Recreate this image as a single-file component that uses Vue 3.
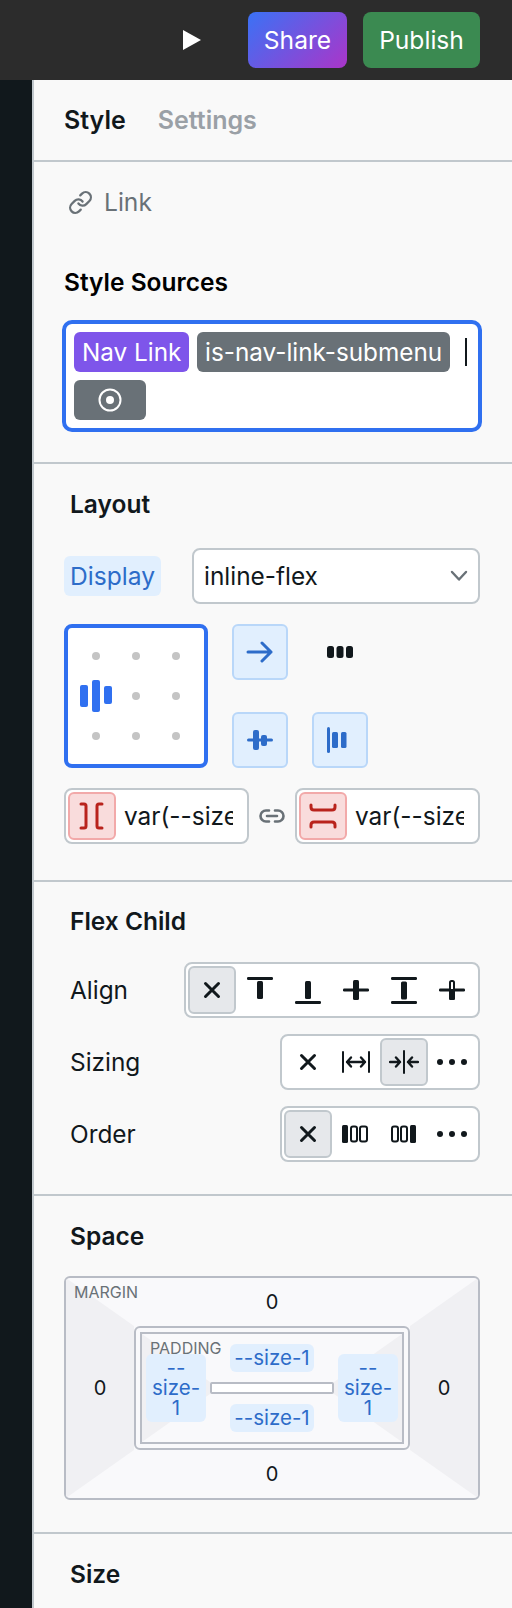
<script setup>
const sides = ['top', 'left', 'right', 'bottom']
</script>

<template>
  <div class="page">
    <header class="topbar">
      <svg class="play" viewBox="0 0 18 20"><path d="M0 0 L18 10 L0 20 Z" fill="#fff" /></svg>
      <button class="top-btn share">Share</button>
      <button class="top-btn publish">Publish</button>
    </header>

    <div class="body">
      <div class="rail"></div>
      <aside class="panel">
        <nav class="tabs">
          <span class="tab active">Style</span>
          <span class="tab">Settings</span>
        </nav>

        <section class="sources">
          <div class="element">
            <svg class="link-icon" viewBox="0 0 24 24" fill="none" stroke="#697177" stroke-width="2.2" stroke-linecap="round" stroke-linejoin="round">
              <path d="M10 13a5 5 0 0 0 7.54.54l3-3a5 5 0 0 0-7.07-7.07l-1.72 1.71" />
              <path d="M14 11a5 5 0 0 0-7.54-.54l-3 3a5 5 0 0 0 7.07 7.07l1.71-1.71" />
            </svg>
            <span>Link</span>
          </div>
          <h2 class="sources-title">Style Sources</h2>
          <div class="source-box">
            <span class="tag purple">Nav Link</span>
            <span class="tag grey">is-nav-link-submenu</span>
            <span class="caret"></span>
            <span class="tag grey state">
              <svg viewBox="0 0 24 24" width="24" height="24" fill="none">
                <circle cx="12" cy="12" r="10.5" stroke="#fff" stroke-width="2" />
                <circle cx="12" cy="12" r="4" fill="#fff" />
              </svg>
            </span>
          </div>
        </section>

        <section class="layout">
          <h2 class="title">Layout</h2>
          <div class="display-row">
            <span class="chip-label">Display</span>
            <div class="select">
              <span>inline-flex</span>
              <svg viewBox="0 0 18 12" width="18" height="12" fill="none" stroke="#697177" stroke-width="2.4" stroke-linecap="round" stroke-linejoin="round"><path d="M2 2 L9 9.5 L16 2" /></svg>
            </div>
          </div>

          <div class="flex-row">
            <div class="align-grid">
              <i v-for="n in 9" :key="n" class="dot" :class="{ hidden: n === 4 }"></i>
              <div class="bars"><b class="b1"></b><b class="b2"></b><b class="b3"></b></div>
            </div>
            <div class="flex-buttons">
              <button class="blue-btn">
                <svg viewBox="0 0 30 30" width="30" height="30" fill="none" stroke="#2d6cc9" stroke-width="3" stroke-linecap="round" stroke-linejoin="round"><path d="M3 15 H26 M17 6 L26 15 L17 24" /></svg>
              </button>
              <span class="plain-cell">
                <svg viewBox="0 0 30 30" width="30" height="30" fill="#11181c"><rect x="2" y="9" width="7" height="12" rx="2.5" /><rect x="11.5" y="9" width="7" height="12" rx="2.5" /><rect x="21" y="9" width="7" height="12" rx="2.5" /></svg>
              </span>
              <button class="blue-btn">
                <svg viewBox="0 0 30 30" width="30" height="30" fill="#2d6cc9"><rect x="2" y="13.5" width="26" height="3" rx="1.5" /><rect x="8" y="5" width="6" height="20" rx="2" /><rect x="16" y="10" width="6" height="11" rx="2" /></svg>
              </button>
              <button class="blue-btn">
                <svg viewBox="0 0 30 30" width="30" height="30" fill="#2d6cc9"><rect x="2" y="2" width="3" height="26" rx="1.5" /><rect x="7" y="7" width="6" height="16" rx="1.5" /><rect x="16" y="7" width="5.5" height="16" rx="1.5" /></svg>
              </button>
            </div>
          </div>

          <div class="gap-row">
            <div class="gap-input">
              <span class="red-box">
                <svg viewBox="0 0 30 30" width="30" height="30" fill="none" stroke="#b9231c" stroke-width="3" stroke-linecap="round"><path d="M4 3 H7 Q9 3 9 5 V25 Q9 27 7 27 H4 M25 3 H22 Q20 3 20 5 V25 Q20 27 22 27 H25" /></svg>
              </span>
              <span class="gap-value">var(--size-1)</span>
            </div>
            <svg class="chain" viewBox="0 0 28 16" width="28" height="16" fill="none" stroke="#697177" stroke-width="2.6" stroke-linecap="round"><path d="M11 2.5 H8 A5.5 5.5 0 0 0 8 13.5 H11 M17 2.5 H20 A5.5 5.5 0 0 1 20 13.5 H17 M9 8 H19" /></svg>
            <div class="gap-input">
              <span class="red-box">
                <svg viewBox="0 0 30 30" width="30" height="30" fill="none" stroke="#b9231c" stroke-width="3" stroke-linecap="round"><path d="M3 4 V6 Q3 9 6 9 H24 Q27 9 27 6 V4 M3 26 V24 Q3 21 6 21 H24 Q27 21 27 24 V26" /></svg>
              </span>
              <span class="gap-value">var(--size-1)</span>
            </div>
          </div>
        </section>

        <section class="child">
          <h2 class="title">Flex Child</h2>
          <div class="prop-row">
            <span class="prop-name">Align</span>
            <div class="seg">
              <span class="cell on"><svg viewBox="0 0 30 30" width="30" height="30" fill="none" stroke="#11181c" stroke-width="3" stroke-linecap="round"><path d="M8.5 8.5 L21.5 21.5 M21.5 8.5 L8.5 21.5" /></svg></span>
              <span class="cell"><svg viewBox="0 0 30 30" width="30" height="30" fill="#11181c"><rect x="2" y="2" width="26" height="3" rx="1.2" /><rect x="12" y="6" width="6" height="18" rx="1.5" /></svg></span>
              <span class="cell"><svg viewBox="0 0 30 30" width="30" height="30" fill="#11181c"><rect x="2" y="26" width="26" height="3" rx="1.2" /><rect x="12" y="6" width="6" height="18" rx="1.5" /></svg></span>
              <span class="cell"><svg viewBox="0 0 30 30" width="30" height="30" fill="#11181c"><rect x="2" y="13.5" width="26" height="3" rx="1.2" /><rect x="12" y="5" width="6" height="20" rx="1.5" /></svg></span>
              <span class="cell"><svg viewBox="0 0 30 30" width="30" height="30" fill="#11181c"><rect x="2" y="2" width="26" height="3" rx="1.2" /><rect x="2" y="26" width="26" height="3" rx="1.2" /><rect x="12" y="6.5" width="6" height="18" rx="1.5" /></svg></span>
              <span class="cell"><svg viewBox="0 0 30 30" width="30" height="30"><rect x="2" y="13.5" width="26" height="3" rx="1.2" fill="#11181c" /><rect x="13" y="6" width="4" height="18" rx="1.5" fill="#fff" stroke="#11181c" stroke-width="2" /><rect x="12" y="14" width="6" height="11" rx="1.5" fill="#11181c" /></svg></span>
            </div>
          </div>
          <div class="prop-row">
            <span class="prop-name">Sizing</span>
            <div class="seg">
              <span class="cell"><svg viewBox="0 0 30 30" width="30" height="30" fill="none" stroke="#11181c" stroke-width="3" stroke-linecap="round"><path d="M8.5 8.5 L21.5 21.5 M21.5 8.5 L8.5 21.5" /></svg></span>
              <span class="cell"><svg viewBox="0 0 30 30" width="30" height="30" fill="none" stroke="#11181c" stroke-width="2" stroke-linecap="round" stroke-linejoin="round"><path d="M2 5 V25 M28 5 V25" /><path d="M6 15 H24 M10 10.5 L6 15 L10 19.5 M20 10.5 L24 15 L20 19.5" stroke-width="2.4" /></svg></span>
              <span class="cell on"><svg viewBox="0 0 30 30" width="30" height="30" fill="none" stroke="#11181c" stroke-width="2" stroke-linecap="round" stroke-linejoin="round"><path d="M15 4 V26" /><path d="M1 15 H11 M7 10.5 L11 15 L7 19.5 M29 15 H19 M23 10.5 L19 15 L23 19.5" stroke-width="2.4" /></svg></span>
              <span class="cell"><svg viewBox="0 0 30 30" width="30" height="30" fill="#11181c"><circle cx="3" cy="15" r="3" /><circle cx="15" cy="15" r="3" /><circle cx="27" cy="15" r="3" /></svg></span>
            </div>
          </div>
          <div class="prop-row">
            <span class="prop-name">Order</span>
            <div class="seg">
              <span class="cell on"><svg viewBox="0 0 30 30" width="30" height="30" fill="none" stroke="#11181c" stroke-width="3" stroke-linecap="round"><path d="M8.5 8.5 L21.5 21.5 M21.5 8.5 L8.5 21.5" /></svg></span>
              <span class="cell"><svg viewBox="0 0 30 30" width="30" height="30" fill="none" stroke="#11181c" stroke-width="2"><rect x="1" y="6" width="6" height="18" rx="1.5" fill="#11181c" stroke="none" /><rect x="10" y="7.5" width="6" height="15" rx="2" /><rect x="19" y="7.5" width="7" height="15" rx="2" /></svg></span>
              <span class="cell"><svg viewBox="0 0 30 30" width="30" height="30" fill="none" stroke="#11181c" stroke-width="2"><rect x="3" y="7.5" width="6" height="15" rx="2" /><rect x="12" y="7.5" width="6" height="15" rx="2" /><rect x="21" y="6" width="6" height="18" rx="1.5" fill="#11181c" stroke="none" /></svg></span>
              <span class="cell"><svg viewBox="0 0 30 30" width="30" height="30" fill="#11181c"><circle cx="3" cy="15" r="3" /><circle cx="15" cy="15" r="3" /><circle cx="27" cy="15" r="3" /></svg></span>
            </div>
          </div>
        </section>

        <section class="space">
          <h2 class="title">Space</h2>
          <div class="box-model">
            <span class="box-label">MARGIN</span>
            <span class="wedge w-left"></span>
            <span class="wedge w-right"></span>
            <span v-for="s in sides" :key="s" class="m-val" :class="'at-' + s">0</span>
            <div class="padding-frame">
              <div class="padding-grid">
                <span class="wedge w-left small"></span>
                <span class="wedge w-right small"></span>
                <span class="box-label">PADDING</span>
                <div v-for="s in sides" :key="s" class="p-cell" :class="'at-' + s">
                  <span class="p-chip">--size-1</span>
                </div>
                <span class="content-box"></span>
              </div>
            </div>
          </div>
        </section>

        <section class="size">
          <h2 class="title">Size</h2>
        </section>
      </aside>
    </div>
  </div>
</template>

<style>
html, body { margin: 0; background: #f9f9f9; }
</style>

<style scoped>
.page {
  width: 512px;
  height: 1608px;
  overflow: hidden;
  font-family: Inter, "Liberation Sans", sans-serif;
  color: #11181c;
  display: flex;
  flex-direction: column;
}
.topbar {
  height: 80px;
  flex: none;
  background: #2c2c2c;
  display: flex;
  align-items: center;
  box-sizing: border-box;
  padding-right: 32px;
}
.play { width: 18px; height: 20px; margin-left: 183px; margin-right: 47px; }
.top-btn {
  height: 56px;
  border: 0;
  border-radius: 8px;
  color: #fff;
  font: 400 24.6px Inter, sans-serif;
  padding: 0;
  margin-top: 0;
}
.share { width: 99px; background: linear-gradient(135deg, #3a72f5 0%, #ab35c9 100%); margin-right: 16px; }
.publish { width: 117px; background: #3b8a51; }

.body { flex: 1; display: flex; min-height: 0; }
.rail { width: 32px; background: #11181c; flex: none; }
.panel {
  flex: 1;
  border-left: 2px solid #c1c8cd;
  background: #f9f9f9;
  min-width: 0;
}
section { border-bottom: 2px solid #c1c8cd; box-sizing: border-box; }
.tabs {
  height: 82px;
  box-sizing: border-box;
  border-bottom: 2px solid #c1c8cd;
  padding: 0 30px;
  display: flex;
  align-items: center;
  gap: 32px;
}
.tab { font-size: 25px; font-weight: 600; color: #9aa0a6; }
.tab.active { color: #11181c; }

.sources { height: 302px; padding: 28px 30px 0 28px; }
.element { display: flex; align-items: center; gap: 11px; color: #697177; font-size: 24.6px; height: 24px; padding-left: 6px; }
.link-icon { width: 25px; height: 25px; }
.sources-title { margin: 54px 0 0 2px; font-size: 24.5px; line-height: 28px; font-weight: 600; color: #000; }
.source-box {
  margin-top: 24px;
  width: 420px;
  height: 112px;
  box-sizing: border-box;
  border: 4px solid #3070f0;
  border-radius: 10px;
  background: #fff;
  padding: 8px;
  display: flex;
  flex-wrap: wrap;
  align-items: flex-start;
  gap: 8px;
}
.tag {
  height: 40px;
  border-radius: 6px;
  color: #fff;
  font-size: 24.3px;
  line-height: 40px;
  padding: 0 8px;
  box-sizing: border-box;
}
.purple { background: #7e55ea; width: 115px; white-space: nowrap; }
.grey { background: #697177; width: 253px; white-space: nowrap; }
.caret { width: 2px; height: 28px; background: #11181c; margin: 6px 0 0 7px; }
.state { width: 72px; display: flex; align-items: center; justify-content: center; padding: 0; }

.layout { height: 418px; padding: 0 30px 0 30px; }
.title { margin: 0; padding: 26px 0 0 6px; font-size: 24.5px; line-height: 28px; font-weight: 600; color: #11181c; }
.display-row { margin-top: 30px; display: flex; align-items: center; gap: 31px; height: 56px; }
.chip-label {
  width: 97px;
  height: 40px;
  background: #e1effe;
  border-radius: 6px;
  color: #2d6cc9;
  font-size: 24.6px;
  line-height: 40px;
  text-align: center;
}
.select {
  width: 288px;
  height: 56px;
  box-sizing: border-box;
  border: 2px solid #c1c8cd;
  border-radius: 8px;
  background: #fff;
  font-size: 24.4px;
  display: flex;
  align-items: center;
  justify-content: space-between;
  padding: 0 10px;
}
.flex-row { margin-top: 20px; display: flex; gap: 24px; height: 144px; }
.align-grid {
  position: relative;
  width: 144px;
  height: 144px;
  box-sizing: border-box;
  border: 4px solid #3070f0;
  border-radius: 8px;
  background: #fff;
  display: grid;
  grid-template-columns: repeat(3, 40px);
  grid-template-rows: repeat(3, 40px);
  justify-content: center;
  align-content: center;
  place-items: center;
}
.dot { width: 8px; height: 8px; border-radius: 50%; background: #c4c4c4; }
.dot.hidden { visibility: hidden; }
.bars { position: absolute; left: 12px; top: 52px; display: flex; align-items: center; gap: 4px; height: 32px; }
.bars b { width: 8px; background: #3070f0; border-radius: 2px; }
.b1 { height: 22px; margin-top: 0; }
.b2 { height: 32px; }
.b3 { height: 18px; margin-top: -2px; }
.flex-buttons { display: grid; grid-template-columns: 56px 56px; grid-template-rows: 56px 56px; gap: 32px 24px; }
.blue-btn {
  width: 56px;
  height: 56px;
  box-sizing: border-box;
  background: #e1effe;
  border: 2px solid #b9d7f9;
  border-radius: 6px;
  padding: 0;
  display: flex;
  align-items: center;
  justify-content: center;
}
.plain-cell { display: flex; align-items: center; justify-content: center; }
.gap-row { margin-top: 20px; display: flex; align-items: center; justify-content: space-between; width: 416px; }
.gap-input {
  width: 185px;
  height: 56px;
  box-sizing: border-box;
  border: 2px solid #c1c8cd;
  border-radius: 8px;
  background: #fff;
  display: flex;
  align-items: center;
  padding: 2px;
  padding-right: 14px;
  gap: 8px;
}
.red-box {
  width: 48px;
  height: 48px;
  flex: none;
  box-sizing: border-box;
  background: #f9dcdc;
  border: 2px solid #f2a9a9;
  border-radius: 6px;
  display: flex;
  align-items: center;
  justify-content: center;
}
.gap-value { font-size: 24.4px; white-space: nowrap; overflow: hidden; flex: 1; min-width: 0; }

.child { height: 314px; padding: 0 30px; }
.child .title { padding-top: 25px; }
.prop-row { display: flex; align-items: center; justify-content: space-between; height: 56px; margin-bottom: 16px; width: 416px; }
.child .prop-row:first-of-type { margin-top: 27px; }
.prop-name { font-size: 24.4px; margin-left: 6px; }
.seg {
  display: flex;
  box-sizing: border-box;
  border: 2px solid #c1c8cd;
  border-radius: 8px;
  background: #fff;
  padding: 2px;
  height: 56px;
}
.cell {
  width: 48px;
  height: 48px;
  box-sizing: border-box;
  border: 2px solid transparent;
  border-radius: 6px;
  display: flex;
  align-items: center;
  justify-content: center;
}
.cell.on { background: #e6e8eb; border-color: #c1c8cd; }

.space { height: 338px; padding: 0 30px; }
.box-model {
  position: relative;
  margin-top: 26px;
  width: 416px;
  height: 224px;
  box-sizing: border-box;
  border: 2px solid #b8bcc5;
  border-radius: 6px;
  overflow: hidden;
  background: #f9f9fb;
  display: grid;
  grid-template-columns: 68px 276px 68px;
  grid-template-rows: 48px 124px 48px;
}
.box-label {
  position: absolute;
  left: 8px;
  top: 4px;
  font-size: 16px;
  line-height: 20px;
  color: #697177;
  z-index: 1;
}
.wedge { background: #f0f0f3; grid-row: 1 / 4; }
.w-left { grid-column: 1; clip-path: polygon(0 0, 100% 48px, 100% calc(100% - 48px), 0 100%); }
.w-right { grid-column: 3; clip-path: polygon(0 48px, 100% 0, 100% 100%, 0 calc(100% - 48px)); }
.m-val { font-size: 20px; display: flex; align-items: center; justify-content: center; z-index: 1; }
.m-val.at-top { grid-column: 2; grid-row: 1; }
.m-val.at-left { grid-column: 1; grid-row: 1 / 4; }
.m-val.at-right { grid-column: 3; grid-row: 1 / 4; }
.m-val.at-bottom { grid-column: 2; grid-row: 3; }
.padding-frame {
  grid-column: 2;
  grid-row: 2;
  box-sizing: border-box;
  border: 2px solid #b8bcc5;
  border-radius: 6px;
  padding: 4px;
  background: #f9f9fb;
}
.padding-grid {
  position: relative;
  height: 100%;
  box-sizing: border-box;
  border: 2px solid #b8bcc5;
  display: grid;
  grid-template-columns: 68px 124px 68px;
  grid-template-rows: 48px 12px 48px;
}
.padding-grid .box-label { left: 8px; top: 4px; }
.p-cell { display: flex; align-items: center; justify-content: center; z-index: 2; pointer-events: none; }
.p-cell.at-top { grid-column: 1 / 4; grid-row: 1; }
.p-cell.at-left { grid-column: 1; grid-row: 1 / 4; }
.p-cell.at-right { grid-column: 3; grid-row: 1 / 4; }
.p-cell.at-bottom { grid-column: 1 / 4; grid-row: 3; }
.p-chip {
  background: #e1effe;
  color: #2d6cc9;
  border-radius: 6px;
  font-size: 20.5px;
  line-height: 20px;
  padding: 4px 0;
  width: 84px;
  text-align: center;
  box-sizing: border-box;
}
.at-left .p-chip, .at-right .p-chip { width: 60px; padding: 4px 5px; }
.content-box {
  grid-column: 2;
  grid-row: 2;
  box-sizing: border-box;
  border: 2px solid #b8bcc5;
  background: #fff;
  border-radius: 2px;
  z-index: 1;
}

.size { border-bottom: 0; padding: 0 30px; }
.size .title { padding-top: 26px; }
</style>
